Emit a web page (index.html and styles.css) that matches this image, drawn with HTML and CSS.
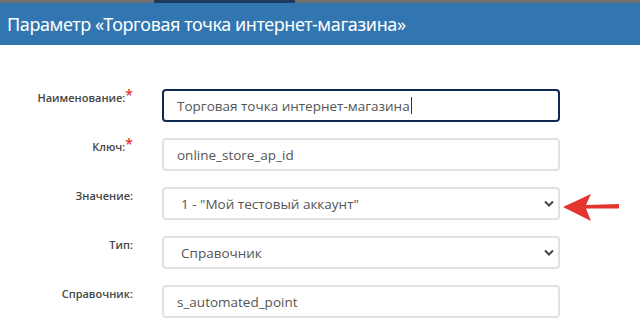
FILE: index.html
```html
<!DOCTYPE html>
<html lang="ru">
<head>
<meta charset="utf-8">
<link rel="stylesheet" href="styles.css">
</head>
<body>
<div class="topstrip"><div class="tab"></div></div>
<header class="header">Параметр «Торговая точка интернет-магазина»</header>
<form class="form">
  <div class="row">
    <label class="label">Наименование:<span class="req">*</span></label>
    <div class="control active"><span class="val">Торговая точка интернет-магазина</span><span class="caret"></span></div>
  </div>
  <div class="row">
    <label class="label">Ключ:<span class="req">*</span></label>
    <div class="control"><span class="val">online_store_ap_id</span></div>
  </div>
  <div class="row">
    <label class="label">Значение:</label>
    <div class="control select"><span class="val">1 - "Мой тестовый аккаунт"</span>
      <svg class="chev" width="10" height="7" viewBox="0 0 10 7"><path d="M1 1.5 L5 5.5 L9 1.5" fill="none" stroke="#444" stroke-width="2"/></svg>
    </div>
    <svg class="arrow" width="62" height="32" viewBox="0 0 62 32"><path d="M2 16 L30 3 L25 14 L58 13 L58 17.5 L25 17.5 L30 30 Z" fill="#e3342f"/></svg>
  </div>
  <div class="row">
    <label class="label">Тип:</label>
    <div class="control select"><span class="val">Справочник</span>
      <svg class="chev" width="10" height="7" viewBox="0 0 10 7"><path d="M1 1.5 L5 5.5 L9 1.5" fill="none" stroke="#444" stroke-width="2"/></svg>
    </div>
  </div>
  <div class="row">
    <label class="label">Справочник:</label>
    <div class="control"><span class="val">s_automated_point</span></div>
  </div>
</form>
</body>
</html>
```
FILE: styles.css
```css
* { box-sizing: border-box; }
body {
  margin: 0;
  background: #fff;
  font-family: "Open Sans", "Noto Sans", sans-serif;
  overflow: hidden;
}
.topstrip {
  height: 3px;
  background: #6f6f6f;
  position: relative;
}
.tab {
  position: absolute;
  left: 154px;
  width: 141px;
  top: 0;
  height: 3px;
  background: #1d3b5c;
}
.header {
  height: 42px;
  background: #3276b1;
  color: #fff;
  font-family: "Noto Sans", "Open Sans", sans-serif;
  font-size: 18px;
  letter-spacing: -0.4px;
  padding-left: 7px;
  display: flex;
  align-items: center;
}
.form {
  padding-top: 44px;
  display: flex;
  flex-direction: column;
  gap: 16px;
}
.row {
  display: flex;
  align-items: flex-start;
  height: 33px;
  position: relative;
}
.label {
  width: 135px;
  text-align: right;
  font-size: 11px;
  font-weight: 600;
  color: #444;
  padding-top: 1px;
  padding-right: 2px;
}
.req {
  color: #e3342f;
  font-size: 14px;
  vertical-align: 2px;
  line-height: 0;
}
.control {
  margin-left: 27px;
  width: 398px;
  height: 33px;
  border: 2px solid #e2e2e2;
  border-radius: 4px;
  display: flex;
  align-items: center;
  padding-left: 13px;
  padding-right: 10px;
  font-size: 13.5px;
  color: #555;
}
.control.active {
  border-color: #0e2a52;
}
.caret {
  display: inline-block;
  width: 1px;
  height: 17px;
  background: #333;
  margin-left: 1px;
}
.select {
  justify-content: space-between;
  padding-left: 17px;
  padding-right: 4px;
}
.arrow {
  position: absolute;
  left: 561px;
  top: 4px;
}
```
